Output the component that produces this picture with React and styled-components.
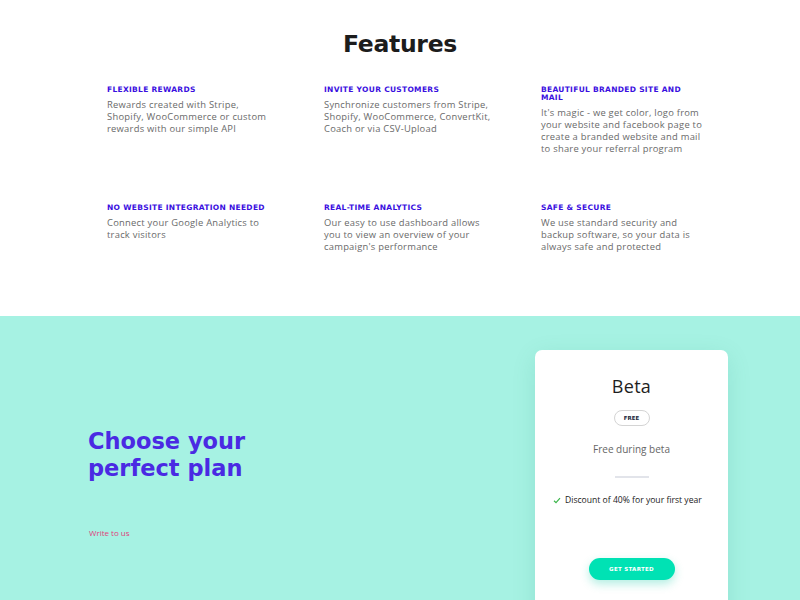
import React from 'react'
import { styled, createGlobalStyle } from 'styled-components'

const GlobalStyle = createGlobalStyle`
  html, body {
    margin: 0;
    padding: 0;
    background: #ffffff;
    font-family: "Open Sans", "Liberation Sans", sans-serif;
  }
`

const features = [
  { title: 'Flexible rewards', text: 'Rewards created with Stripe, Shopify, WooCommerce or custom rewards with our simple API' },
  { title: 'Invite your customers', text: 'Synchronize customers from Stripe, Shopify, WooCommerce, ConvertKit, Coach or via CSV-Upload' },
  { title: 'Beautiful branded site and mail', text: "It's magic - we get color, logo from your website and facebook page to create a branded website and mail to share your referral program" },
  { title: 'No website integration needed', text: 'Connect your Google Analytics to track visitors' },
  { title: 'Real-time analytics', text: "Our easy to use dashboard allows you to view an overview of your campaign's performance" },
  { title: 'Safe & secure', text: 'We use standard security and backup software, so your data is always safe and protected' },
]

export default function App() {
  return (
    <>
      <GlobalStyle />
      <FeaturesSection>
        <Heading>Features</Heading>
        <FeatureGrid>
          {features.map((f) => (
            <Feature key={f.title}>
              <FeatureTitle>{f.title}</FeatureTitle>
              <FeatureText>{f.text}</FeatureText>
            </Feature>
          ))}
        </FeatureGrid>
      </FeaturesSection>

      <PricingSection>
        <PlanIntro>
          <PlanHeading>Choose your<br />perfect plan</PlanHeading>
          <WriteLink href="#">Write to us</WriteLink>
        </PlanIntro>
        <Card>
          <PlanName>Beta</PlanName>
          <Pill>Free</Pill>
          <PlanPrice>Free during beta</PlanPrice>
          <Divider />
          <PerkList>
            <Perk>
              <svg width="8" height="7" viewBox="0 0 8 7">
                <path d="M1 3.8 L3 5.6 L7 1.2" fill="none" stroke="#3bb54a" strokeWidth="1.2" />
              </svg>
              Discount of 40% for your first year
            </Perk>
          </PerkList>
          <StartButton>Get started</StartButton>
        </Card>
      </PricingSection>
    </>
  )
}

const FeaturesSection = styled.section`
  height: 316px;
  padding-top: 28px;
  box-sizing: border-box;
  background: #ffffff;
`

const Heading = styled.h2`
  margin: 0;
  text-align: center;
  font-family: "DejaVu Sans", sans-serif;
  font-size: 23.5px;
  line-height: 32px;
  font-weight: 700;
  letter-spacing: -0.3px;
  color: #1c1c1c;
`

const FeatureGrid = styled.div`
  display: grid;
  grid-template-columns: repeat(3, 217px);
  grid-auto-rows: 118px;
  padding: 26px 0 0 107px;
`

const Feature = styled.div`
  width: 167px;
`

const FeatureTitle = styled.h3`
  max-width: 161px;
  margin: 0 0 5px;
  font-family: "DejaVu Sans", sans-serif;
  font-size: 7.5px;
  line-height: 8px;
  font-weight: 700;
  letter-spacing: 0.3px;
  text-transform: uppercase;
  color: #3a0fe0;
`

const FeatureText = styled.p`
  margin: 0;
  font-size: 9.4px;
  line-height: 12px;
  letter-spacing: 0.25px;
  color: #6a6a6a;
`

const PricingSection = styled.section`
  display: flex;
  align-items: flex-start;
  height: 284px;
  padding: 34px 72px 0 88px;
  box-sizing: border-box;
  background: #a6f2e3;
  overflow: hidden;
`

const PlanIntro = styled.div`
  flex: 1;
  padding-top: 78px;
`

const PlanHeading = styled.h2`
  margin: 0;
  font-family: "DejaVu Sans", sans-serif;
  font-size: 22.5px;
  line-height: 27px;
  font-weight: 700;
  color: #4a2ae3;
`

const WriteLink = styled.a`
  display: inline-block;
  margin: 45px 0 0 1px;
  font-size: 8px;
  color: #e0407c;
  text-decoration: none;
`

const Card = styled.div`
  width: 193px;
  height: 290px;
  display: flex;
  flex-direction: column;
  align-items: center;
  padding-top: 24px;
  box-sizing: border-box;
  background: #ffffff;
  border-radius: 7px;
  box-shadow: 0 6px 24px rgba(0, 120, 100, 0.12);
`

const PlanName = styled.div`
  font-size: 18px;
  line-height: 24px;
  font-weight: 400;
  color: #1e1e1e;
  letter-spacing: 0.3px;
`

const Pill = styled.div`
  margin-top: 12px;
  width: 36px;
  height: 16px;
  box-sizing: border-box;
  border: 1px solid #d4d4d4;
  border-radius: 8px;
  display: flex;
  align-items: center;
  justify-content: center;
  font-family: "DejaVu Sans", sans-serif;
  font-size: 5.5px;
  font-weight: 700;
  text-transform: uppercase;
  color: #1a1f3a;
`

const PlanPrice = styled.div`
  margin-top: 16px;
  font-size: 10px;
  line-height: 14px;
  color: #666666;
`

const Divider = styled.div`
  margin-top: 20px;
  width: 34px;
  height: 2px;
  background: #e2e4ea;
`

const PerkList = styled.ul`
  align-self: stretch;
  list-style: none;
  margin: 16px 0 0;
  padding: 0 0 0 18px;
`

const Perk = styled.li`
  display: flex;
  align-items: center;
  gap: 4px;
  font-size: 8.6px;
  line-height: 12px;
  color: #222;
`

const StartButton = styled.button`
  margin-top: 52px;
  width: 86px;
  height: 22px;
  border: none;
  border-radius: 11px;
  background: #00e2b4;
  color: #ffffff;
  font-family: "DejaVu Sans", sans-serif;
  font-size: 5.5px;
  font-weight: 700;
  letter-spacing: 0.3px;
  text-transform: uppercase;
  box-shadow: 0 4px 10px rgba(0, 200, 160, 0.3);
`
